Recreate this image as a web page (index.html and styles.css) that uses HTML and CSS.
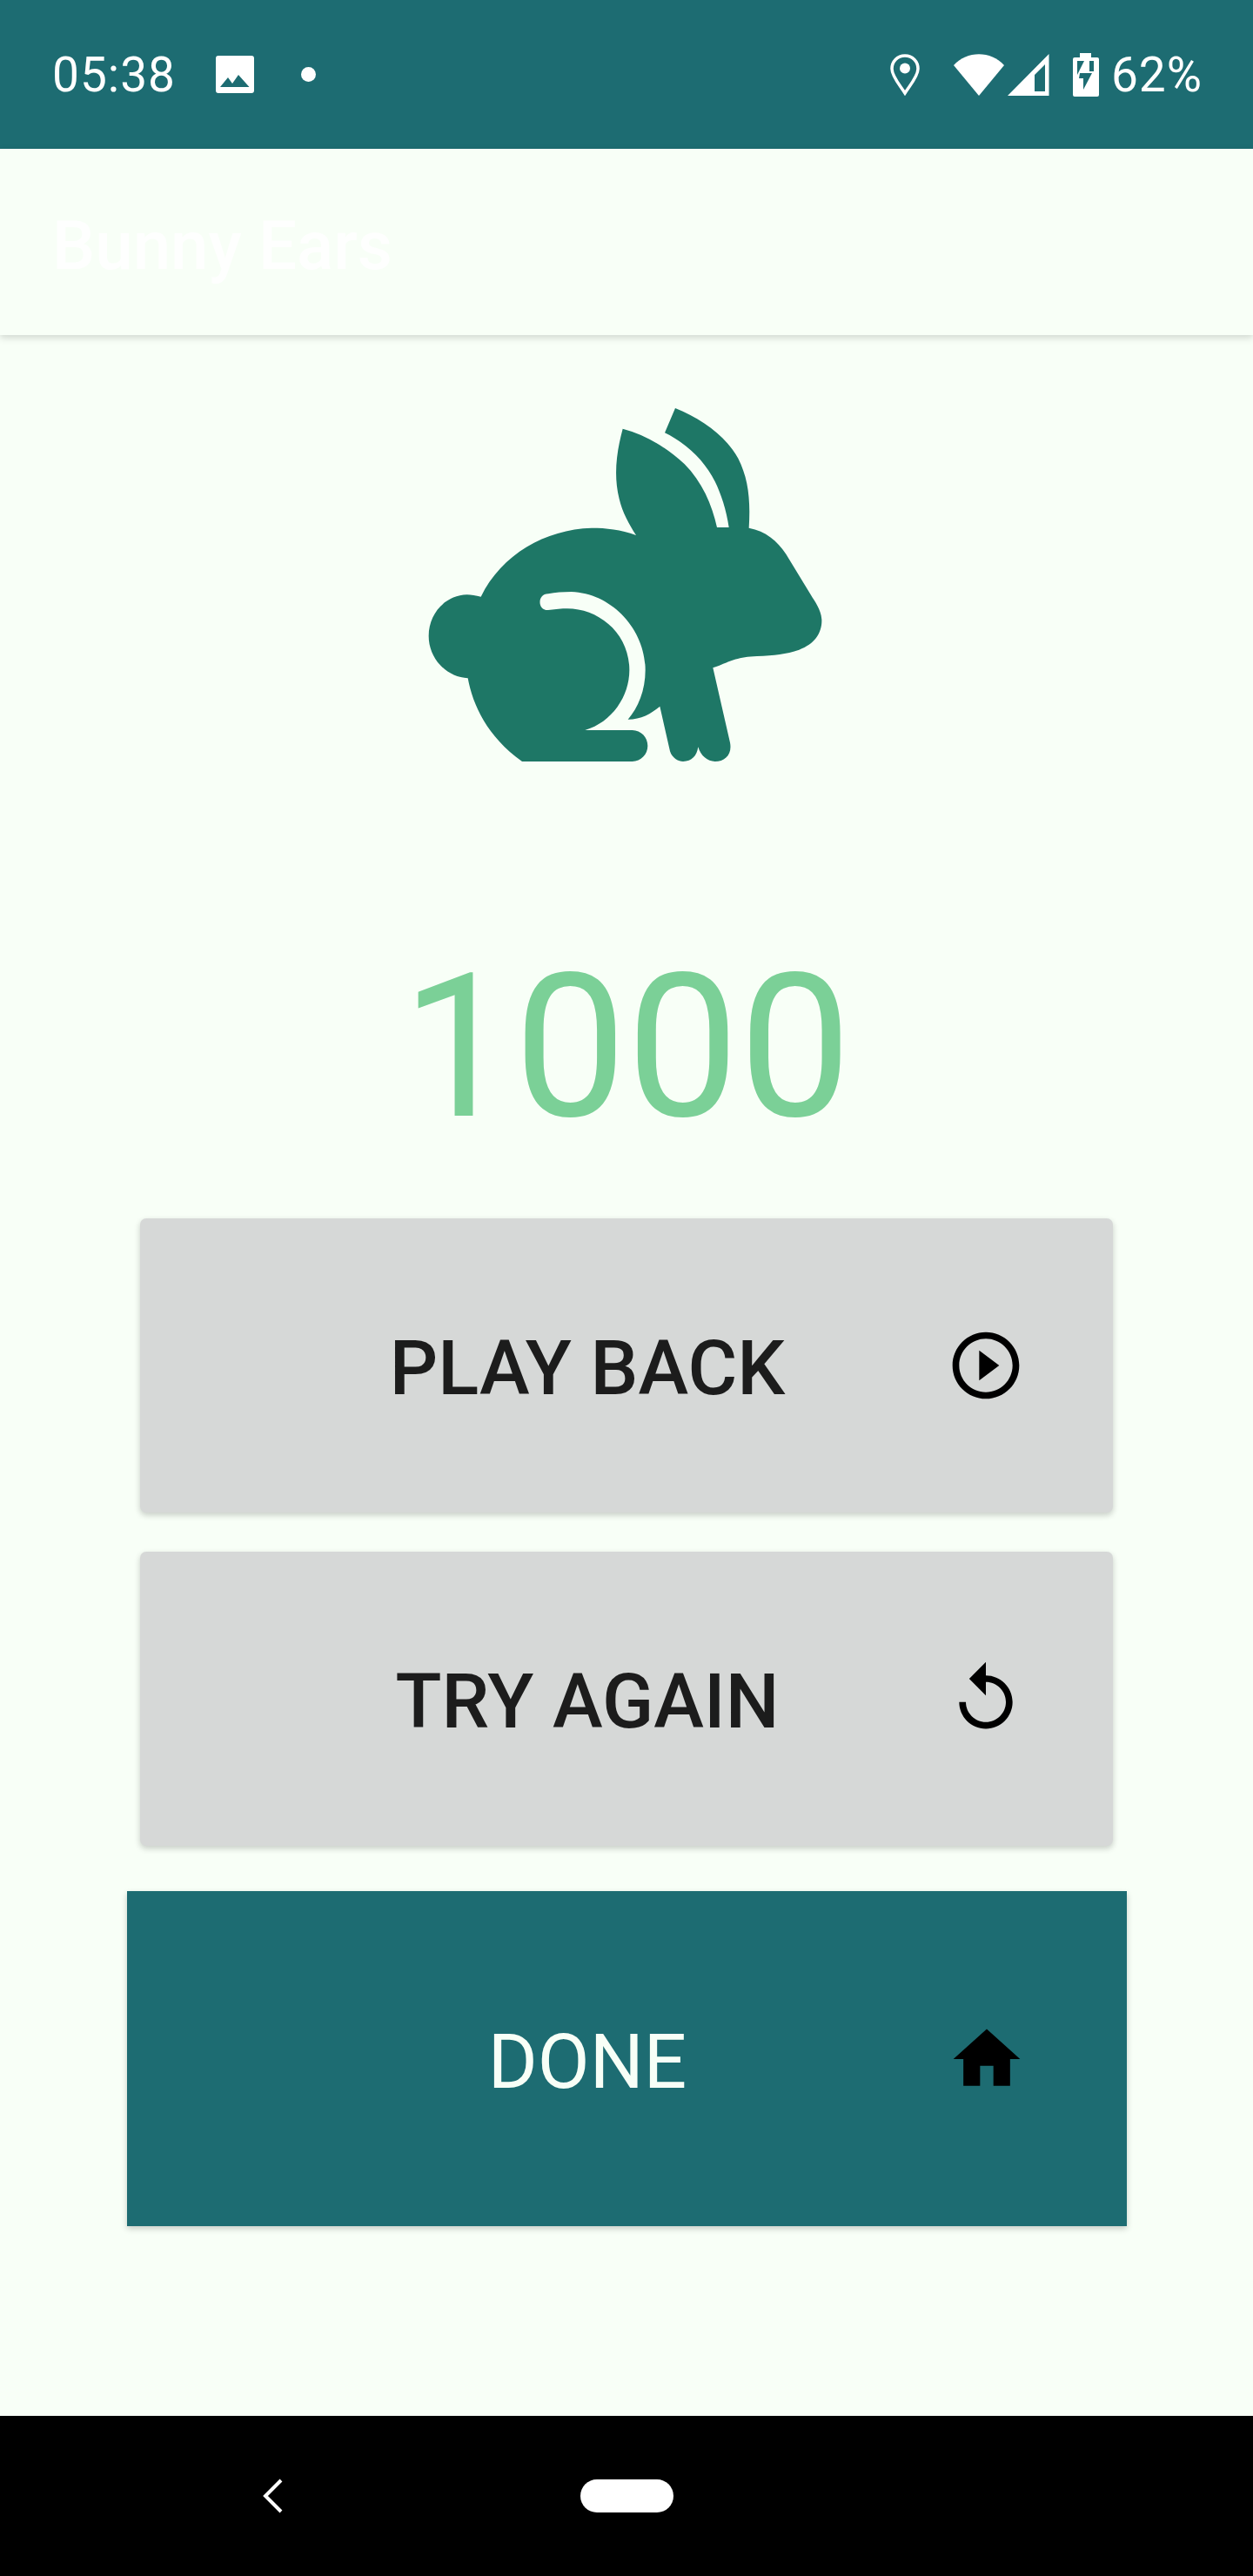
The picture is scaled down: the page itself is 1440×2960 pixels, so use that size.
FILE: index.html
```html
<!DOCTYPE html>
<html lang="en">
<head>
    <meta charset="UTF-8">
    <meta name="viewport" content="width=device-width, initial-scale=1.0">
    <title>Bunny Ears</title>
    <link rel="stylesheet" href="styles.css">
</head>
<body>
    <div class="status-bar">
        <div class="status-left">
            <span class="status-text">05:38</span>
            <svg class="icon-image" width="44" height="43" viewBox="0 0 44 43"><path fill="#fff" fill-rule="evenodd" d="M3 0H41A3 3 0 0 1 44 3V40A3 3 0 0 1 41 43H3A3 3 0 0 1 0 40V3A3 3 0 0 1 3 0ZM5 36H38.5L26 22L19 32L14 25Z"/></svg>
            <span class="status-dot"></span>
        </div>
        <div class="status-right">
            <svg class="icon-pin" width="34" height="48" viewBox="0 0 34 48"><path fill="none" stroke="#fff" stroke-width="3.5" d="M17 2C8 2 2 9 2 17C2 26 12 37 17 45C22 37 32 26 32 17C32 9 26 2 17 2Z"/><circle fill="#fff" cx="17" cy="16.5" r="6"/></svg>
            <svg class="icon-wifi" width="58" height="48" viewBox="0 0 58 48"><path fill="#fff" d="M0 13C15 -4 43 -4 58 13L29 48Z"/></svg>
            <svg class="icon-signal" width="48" height="48" viewBox="0 0 48 48"><path fill="#fff" fill-rule="evenodd" d="M0 48L47.5 0V48ZM31 24V43H43V12Z"/></svg>
            <svg class="icon-battery" width="30" height="50" viewBox="0 0 30 50">
                <path fill="#fff" d="M8 0H21V5H28A2 2 0 0 1 30 7V48A2 2 0 0 1 28 50H2A2 2 0 0 1 0 48V7A2 2 0 0 1 2 5H8Z"/>
                <path fill="#1d6c72" d="M5 9H13L5 25ZM19 9H24V21H19ZM8 23L7 29H12V42L22 23Z"/>
            </svg>
            <span class="status-text">62%</span>
        </div>
    </div>

    <div class="app-bar">Bunny Ears</div>

    <div class="main">
        <svg class="bunny" width="500" height="460" viewBox="0 0 1500 1380">
            <path fill="#1e7766" d="M390 1305L770 1305C800 1305 823 1280 823 1251C823 1222 800 1197 770 1197L607 1197C700 1170 760 1080 760 990C760 860 650 775 540 778C515 778 500 782 480 783C442 785 442 727 480 727C505 722 530 720 560 720C700 725 815 850 815 990C815 1060 790 1120 755 1160C800 1160 835 1140 865 1115L900 1270C908 1295 930 1305 945 1305C975 1305 993 1285 997 1255C1005 1285 1030 1305 1055 1305C1090 1305 1115 1280 1107 1240L1048 982C1100 965 1120 945 1200 942C1260 940 1300 935 1345 920C1400 900 1425 860 1423 815C1420 780 1400 755 1385 730L1300 590C1270 545 1230 510 1172 500C1178 400 1170 330 1135 260C1090 180 1010 125 918 87L882 172C960 210 1020 270 1055 340C1075 380 1095 440 1103 498L1062 498C1045 420 1010 340 950 280C890 225 820 180 737 158C715 240 705 320 725 400C735 445 760 490 783 525C730 505 680 500 630 500C470 505 320 590 248 737C230 733 215 730 200 730C125 732 68 795 68 872C68 950 130 1015 203 1018C220 1110 270 1220 390 1305Z"/>
        </svg>

        <div class="score">1000</div>

        <div class="btn btn-grey">
            <span class="btn-label">PLAY BACK</span>
            <svg width="92" height="92" viewBox="0 0 24 24"><path d="M10 16.5l6-4.5-6-4.5v9zM12 2C6.48 2 2 6.48 2 12s4.48 10 10 10 10-4.48 10-10S17.52 2 12 2zm0 18c-4.41 0-8-3.59-8-8s3.59-8 8-8 8 3.59 8 8-3.59 8-8 8z"/></svg>
        </div>
        <div class="btn btn-grey btn-second">
            <span class="btn-label">TRY AGAIN</span>
            <svg width="92" height="92" viewBox="0 0 24 24"><path d="M12 5V1L7 6l5 5V7c3.31 0 6 2.69 6 6s-2.69 6-6 6-6-2.69-6-6H4c0 4.42 3.58 8 8 8s8-3.58 8-8-3.58-8-8-8z"/></svg>
        </div>
        <div class="btn btn-done">
            <span class="btn-label">DONE</span>
            <svg width="92" height="92" viewBox="0 0 24 24"><path d="M10 20v-6h4v6h5v-8h3L12 3 2 12h3v8z"/></svg>
        </div>
    </div>

    <div class="nav-bar">
        <svg class="nav-back" width="24" height="40" viewBox="0 0 24 40"><path fill="none" stroke="#fff" stroke-width="4" d="M22 2L4 20L22 38"/></svg>
        <span class="nav-home"></span>
    </div>
</body>
</html>
```

FILE: styles.css
```css
* { box-sizing: border-box; }
body { margin: 0; height: 2960px; background-color: #f8fff7; font-family: Roboto, sans-serif; display: flex; flex-direction: column; }

.status-bar { height: 171px; background-color: #1d6c72; color: white; display: flex; justify-content: space-between; align-items: center; padding: 0 58px 0 60px; }
.status-left, .status-right { display: flex; align-items: center; }
.status-text { font-size: 55px; line-height: 60px; letter-spacing: 1px; }
.icon-image { margin-left: 46px; }
.status-dot { width: 17px; height: 17px; border-radius: 50%; background-color: white; margin-left: 54px; }
.icon-wifi { margin-left: 39px; }
.icon-signal { margin-left: 4px; }
.icon-battery { margin-left: 27px; }
.status-right .status-text { margin-left: 14px; }

.app-bar { height: 214px; background-color: #f8fff7; color: #fefffe; font-size: 78px; font-weight: 500; line-height: 224px; padding-left: 60px; box-shadow: 0 3px 8px rgba(0, 0, 0, 0.16); }

.main { flex: 1; display: flex; flex-direction: column; align-items: center; padding-top: 55px; }
.score { font-size: 230px; line-height: 280px; color: #7bd097; margin-top: 164px; }

.btn { display: flex; align-items: center; }
.btn-label { flex: 1; text-align: center; font-size: 87px; padding-top: 6px; }
.btn-grey { width: 1118px; height: 338px; margin-top: 56px; padding: 0 100px 0 102px; background-color: #d6d8d7; color: #1c1c1c; border-radius: 7px; box-shadow: 0 3px 7px rgba(0, 0, 0, 0.2); }
.btn-grey .btn-label { font-weight: 500; }
.btn-second { margin-top: 45px; }
.btn-done { width: 1149px; height: 385px; margin-top: 52px; padding: 0 115px 0 117px; background-color: #1d6c72; color: #f8fff7; box-shadow: 0 3px 7px rgba(0, 0, 0, 0.2); }

.nav-bar { height: 184px; background-color: black; display: flex; align-items: center; padding-left: 301px; }
.nav-home { width: 107px; height: 38px; border-radius: 19px; background-color: white; margin-left: 342px; }
```
